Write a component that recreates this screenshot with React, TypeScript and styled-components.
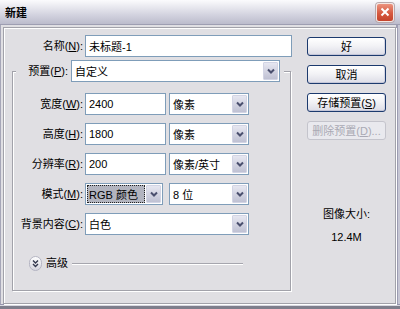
import React from 'react'
import styled, { createGlobalStyle } from 'styled-components'

const GlobalStyle = createGlobalStyle`
  html, body {
    margin: 0;
    padding: 0;
    background: #e0dfe3;
  }
  body {
    font-family: 'Liberation Sans', 'Noto Sans CJK SC', sans-serif;
    font-size: 11px;
    color: #000;
  }
  * {
    box-sizing: border-box;
  }
`

const Window = styled.div`
  width: 400px;
  height: 309px;
  display: flex;
  flex-direction: column;
  overflow: hidden;
  background: #e0dfe3;
  box-shadow: inset 0 -3px 0 #7e7e8c, inset 0 -4px 0 #d8d8e0, inset 0 -5px 0 #9696ae,
    inset 1px 0 0 #a6a6b8, inset -2px 0 0 #c6c6d4, inset -4px 0 0 #9c9cb2;
`

const TitleBar = styled.div`
  height: 25px;
  flex: 0 0 25px;
  display: flex;
  align-items: center;
  justify-content: space-between;
  padding: 0 6px 0 5px;
  background: linear-gradient(to bottom, #fbfbfd 0%, #ebebf1 25%, #d4d4e0 60%, #bcbccc 100%);
  border-bottom: 1px solid #9e9eb2;
`

const Title = styled.span`
  font-family: 'Noto Sans CJK SC', sans-serif;
  font-weight: bold;
  font-size: 11px;
  line-height: 14px;
`

const CloseButton = styled.div`
  width: 18px;
  height: 19px;
  border-radius: 3px;
  border: 1px solid #f4e6e2;
  background: linear-gradient(to bottom, #eb937f 0%, #d6593f 55%, #c4432b 100%);
  display: flex;
  align-items: center;
  justify-content: center;
  box-shadow: 0 0 0 1px #b8a8ac;
`

const Body = styled.div`
  flex: 1;
  display: flex;
  padding: 2px 4px 5px 3px;
`

const Panel = styled.div`
  flex: 1;
  display: flex;
  align-items: flex-start;
  border: 1px solid #a2a2aa;
  box-shadow: inset 1px 1px 0 #fff, 1px 1px 0 #fff;
`

const LeftCol = styled.div`
  width: 289px;
  padding-top: 7px;
`

const Row = styled.div`
  display: flex;
  align-items: center;
  height: 22px;
`

const FieldLabel = styled.span<{ $w: number }>`
  width: ${p => p.$w}px;
  flex: 0 0 ${p => p.$w}px;
  text-align: right;
  padding-right: 2px;
  white-space: nowrap;
  line-height: 14px;
`

const TextBox = styled.div<{ $w: number; $ml?: number }>`
  width: ${p => p.$w}px;
  height: 22px;
  margin-left: ${p => p.$ml || 0}px;
  background: #fff;
  border: 1px solid #7f9db9;
  padding: 0 3px;
  display: flex;
  align-items: center;
  white-space: nowrap;
`

const Combo = styled.div<{ $w: number; $ml?: number }>`
  width: ${p => p.$w}px;
  height: 22px;
  margin-left: ${p => p.$ml || 0}px;
  background: #fff;
  border: 1px solid #7f9db9;
  padding: 1px;
  display: flex;
`

const ComboText = styled.span<{ $selected?: boolean }>`
  flex: 1;
  display: flex;
  align-items: center;
  padding-left: 2px;
  margin-right: 1px;
  white-space: nowrap;
  background: ${p => (p.$selected ? '#b2b4bf' : 'transparent')};
  outline: ${p => (p.$selected ? '1px dotted #222' : 'none')};
  outline-offset: -1px;
`

const DropButton = styled.span`
  width: 15px;
  flex: 0 0 15px;
  display: flex;
  align-items: center;
  justify-content: center;
  border: 1px solid #d2d4e4;
  border-radius: 1px;
  background: linear-gradient(to bottom, #e6e7f1 0%, #d3d4e2 50%, #bfc1d3 100%);
`

const GroupBox = styled.fieldset`
  margin: 3px 0 0 8px;
  width: 279px;
  padding: 11px 3px 19px 3px;
  border: 1px solid #a2a2aa;
  box-shadow: inset 1px 1px 0 #fff, 1px 1px 0 #fff;
  display: flex;
  flex-direction: column;
  gap: 8px;
`

const Legend = styled.legend`
  padding: 0 4px 0 2px;
  background: #e0dfe3;
  display: flex;
  align-items: center;
  height: 22px;
`

const AdvancedRow = styled.div`
  display: flex;
  align-items: center;
  height: 16px;
  margin-top: 12px;
  padding-left: 13px;
`

const AdvancedText = styled.span`
  margin-left: 4px;
  line-height: 14px;
`

const Rule = styled.span`
  width: 171px;
  height: 1px;
  margin-left: 4px;
  background: #a6a6ae;
  box-shadow: 0 1px 0 #fff;
`

const RightCol = styled.div`
  width: 79px;
  margin-left: 14px;
  padding-top: 9px;
  display: flex;
  flex-direction: column;
  align-items: center;
`

const Button = styled.button`
  width: 79px;
  height: 19px;
  margin-bottom: 9px;
  padding: 0;
  font: inherit;
  line-height: 14px;
  color: #000;
  border: 1px solid #1c3a6e;
  border-radius: 3px;
  background: linear-gradient(to bottom, #ffffff 0%, #f3f3f6 45%, #dcdce6 100%);
  box-shadow: inset 0 -1px 0 #c4c6d8, inset -1px 0 0 #d4d6e4;

  &:disabled {
    color: #a9a9b4;
    border-color: #c4c4cc;
    background: #e9e9ee;
    box-shadow: none;
  }
`

const SizeLabel = styled.div`
  margin-top: 58px;
  line-height: 14px;
  white-space: nowrap;
`

const SizeValue = styled.div`
  margin-top: 9px;
  line-height: 14px;
`

const Chevron = () => (
  <svg width='8' height='6' viewBox='0 0 8 6'>
    <polyline points='1,1.5 4,4.5 7,1.5' fill='none' stroke='#4a4f6e' strokeWidth='2' />
  </svg>
)

const ExpandIcon = () => (
  <svg width='13' height='15' viewBox='0 0 13 15'>
    <defs>
      <linearGradient id='expandFill' x1='0' y1='0' x2='0' y2='1'>
        <stop offset='0' stopColor='#ffffff' />
        <stop offset='1' stopColor='#d4d4de' />
      </linearGradient>
    </defs>
    <rect x='0.5' y='0.5' width='12' height='14' rx='6' fill='url(#expandFill)' stroke='#b4b4c2' />
    <polyline points='4,4.5 6.5,7 9,4.5' fill='none' stroke='#33384e' strokeWidth='1.4' />
    <polyline points='4,8 6.5,10.5 9,8' fill='none' stroke='#33384e' strokeWidth='1.4' />
  </svg>
)

const Select = ({ w, ml, value, selected }: { w: number; ml?: number; value: string; selected?: boolean }) => (
  <Combo $w={w} $ml={ml}>
    <ComboText $selected={selected}>{value}</ComboText>
    <DropButton>
      <Chevron />
    </DropButton>
  </Combo>
)

const App = () => {
  return (
    <>
      <GlobalStyle />
      <Window>
        <TitleBar>
          <Title>新建</Title>
          <CloseButton>
            <svg width='10' height='10' viewBox='0 0 10 10'>
              <path d='M1.5 1.5 L8.5 8.5 M8.5 1.5 L1.5 8.5' stroke='#fff' strokeWidth='2' />
            </svg>
          </CloseButton>
        </TitleBar>

        <Body>
          <Panel>
            <LeftCol>
              <Row>
                <FieldLabel $w={81}>
                  名称(<u>N</u>):
                </FieldLabel>
                <TextBox $w={207}>未标题-1</TextBox>
              </Row>

              <GroupBox>
                <Legend>
                  <FieldLabel $w={52}>
                    预置(<u>P</u>):
                  </FieldLabel>
                  <Select w={209} ml={1} value='自定义' />
                </Legend>

                <Row>
                  <FieldLabel $w={69}>
                    宽度(<u>W</u>):
                  </FieldLabel>
                  <TextBox $w={81}>2400</TextBox>
                  <Select w={80} ml={3} value='像素' />
                </Row>

                <Row>
                  <FieldLabel $w={69}>
                    高度(<u>H</u>):
                  </FieldLabel>
                  <TextBox $w={81}>1800</TextBox>
                  <Select w={80} ml={3} value='像素' />
                </Row>

                <Row>
                  <FieldLabel $w={69}>
                    分辨率(<u>R</u>):
                  </FieldLabel>
                  <TextBox $w={81}>200</TextBox>
                  <Select w={80} ml={3} value='像素/英寸' />
                </Row>

                <Row>
                  <FieldLabel $w={69}>
                    模式(<u>M</u>):
                  </FieldLabel>
                  <Select w={78} value='RGB 颜色' selected />
                  <Select w={80} ml={6} value='8 位' />
                </Row>

                <Row>
                  <FieldLabel $w={69}>
                    背景内容(<u>C</u>):
                  </FieldLabel>
                  <Select w={164} value='白色' />
                </Row>

                <AdvancedRow>
                  <ExpandIcon />
                  <AdvancedText>高级</AdvancedText>
                  <Rule />
                </AdvancedRow>
              </GroupBox>
            </LeftCol>

            <RightCol>
              <Button type='button'>好</Button>
              <Button type='button'>取消</Button>
              <Button type='button'>
                存储预置(<u>S</u>)
              </Button>
              <Button type='button' disabled>
                删除预置(<u>D</u>)...
              </Button>
              <SizeLabel>图像大小:</SizeLabel>
              <SizeValue>12.4M</SizeValue>
            </RightCol>
          </Panel>
        </Body>
      </Window>
    </>
  )
}

export default App
